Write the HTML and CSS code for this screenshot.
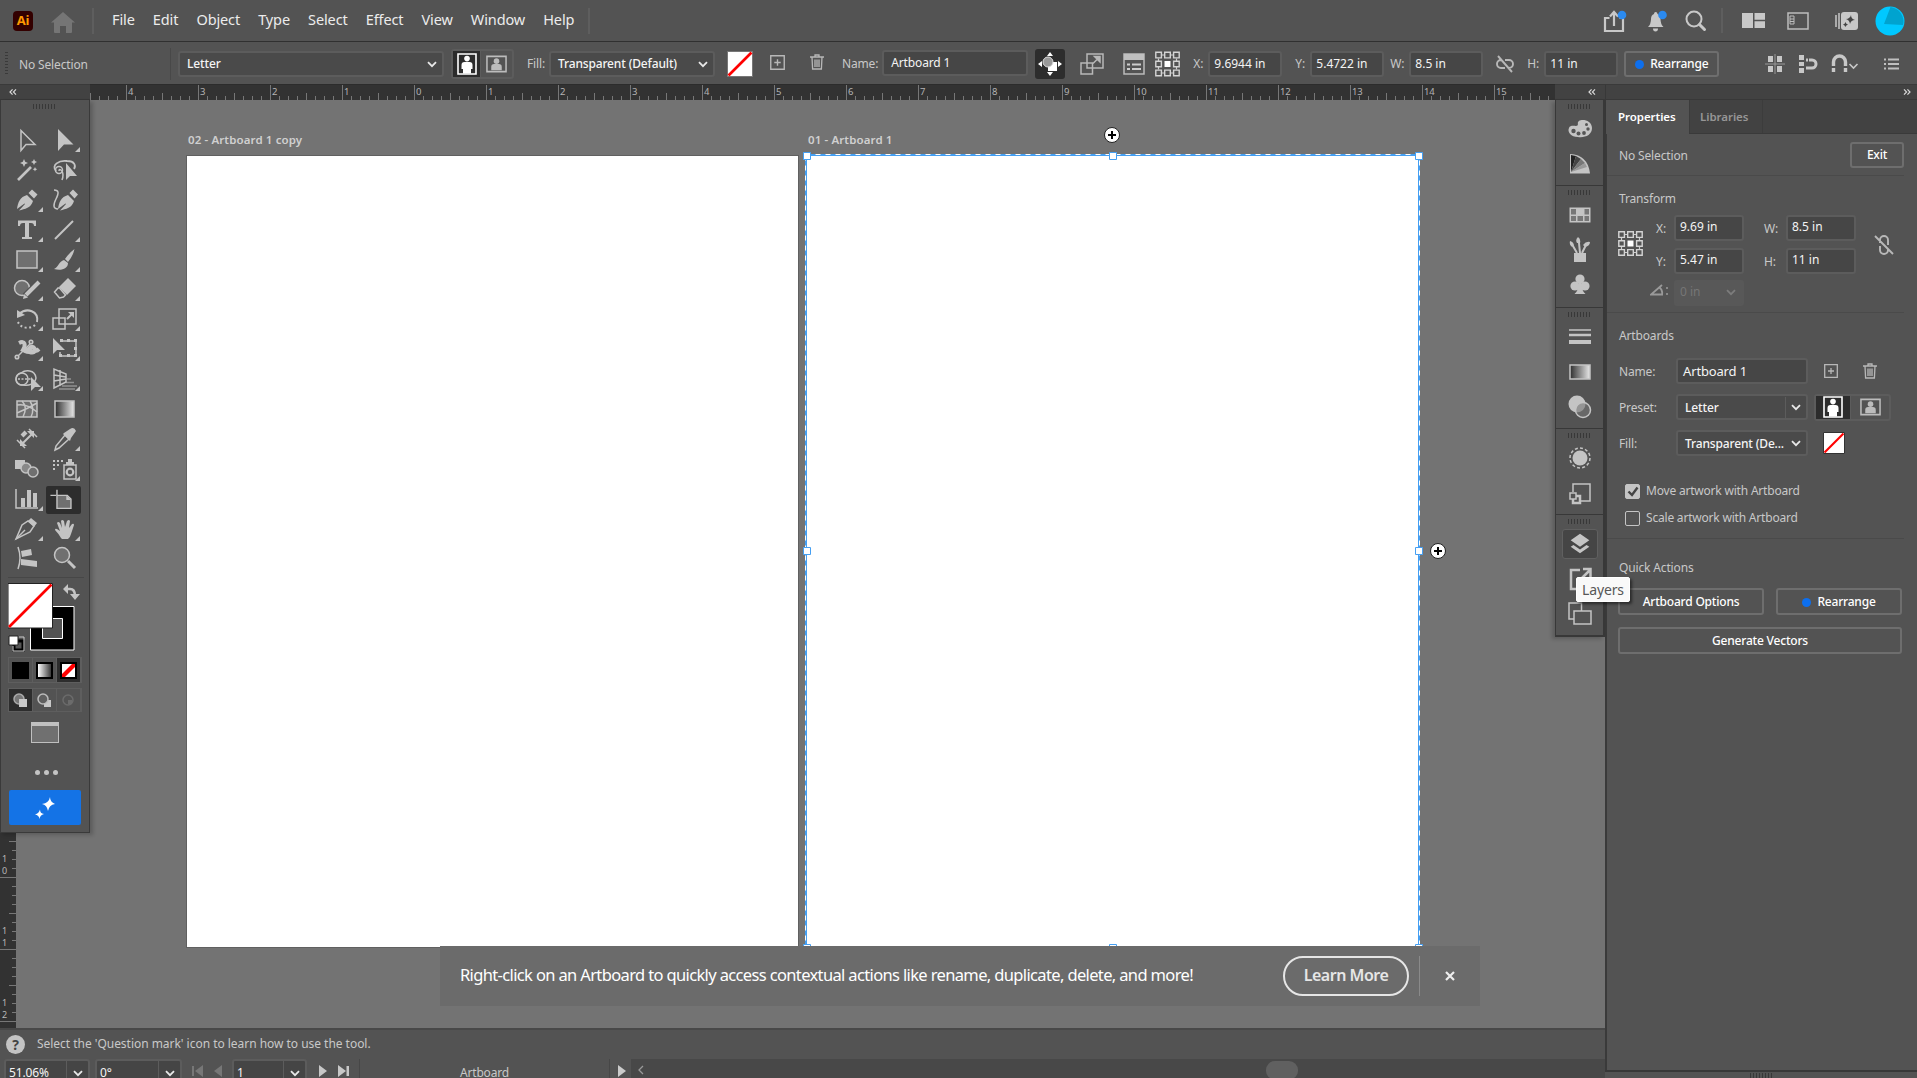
FILE: index.html
```html
<!DOCTYPE html>
<html lang="en">
<head>
  <meta charset="UTF-8" />
  <meta name="viewport" content="width=device-width, initial-scale=1.0"/>
  <title>Illustrator</title>
  <link rel="stylesheet" href="styles.css">
</head>
<body>
  <!-- Shared icons -->
  <svg class="defs" width="0" height="0">
    <defs>
      <linearGradient id="grad"><stop offset="0" stop-color="#2e2e2e"/><stop offset="1" stop-color="#e8e8e8"/></linearGradient>
      <linearGradient id="gradLight"><stop offset="0" stop-color="#fff"/><stop offset="1" stop-color="#3a3a3a"/></linearGradient>
    </defs>
    <symbol id="chevron" viewBox="0 0 10 7"><path d="M1 1.2l4 4 4-4" fill="none" stroke="currentColor" stroke-width="1.8"/></symbol>
    <symbol id="portrait" viewBox="0 0 20 22"><path d="M1 1h18v20H1z" fill="none" stroke="currentColor" stroke-width="1.6"/><circle cx="10" cy="5.600" r="2.8" fill="currentColor"/><path d="M4.500 12q0-3 3-3h5q3 0 3 3v4H14v4.500H6V16H4.500z" fill="currentColor"/></symbol>
    <symbol id="landscape" viewBox="0 0 22 18"><path d="M1 1h20v16H1z" fill="none" stroke="currentColor" stroke-width="1.6"/><circle cx="11" cy="6" r="2.900" fill="currentColor"/><path d="M5.500 15.500V12q0-3 3-3h5q3 0 3 3v3.500z" fill="currentColor"/></symbol>
    <symbol id="add" viewBox="0 0 14 14"><path d="M.7.7h12.600v12.600H.7zM7 4v6M4 7h6" fill="none" stroke="currentColor" stroke-width="1.300"/></symbol>
    <symbol id="trash" viewBox="0 0 14 16"><path d="M0 3h14M5 3V1h4v2M2 3l.6 12h8.800L12 3M5 5.500v7.500M7 5.500v7.500M9 5.500v7.500" fill="none" stroke="currentColor" stroke-width="1.300"/></symbol>
    <symbol id="refpoint" viewBox="0 0 25 25"><path d="M7 3.500h3M15 3.500h3M7 21.500h3M15 21.500h3M3.500 7v3M3.500 15v3M21.500 7v3M21.500 15v3" stroke="#ccc" stroke-width="1.200"/><path d="M.8.8h5.600v5.600H.8zM9.700.8h5.600v5.600H9.700zM18.600.8h5.600v5.600h-5.600zM.8 9.700h5.600v5.600H.8zM18.600 9.700h5.600v5.600h-5.600zM.8 18.600h5.600v5.600H.8zM9.700 18.600h5.600v5.600H9.700zM18.600 18.600h5.600v5.600h-5.600z" fill="none" stroke="#d4d4d4" stroke-width="1.400"/><path d="M9.500 9.500h6v6h-6z" fill="#fff"/></symbol>
    <symbol id="unlink" viewBox="0 0 20 20"><path d="M7 6H6a4 4 0 0 0 0 8h4M10 6h4a4 4 0 0 1 0 8h-1M3 2l14 16" fill="none" stroke="currentColor" stroke-width="1.900"/></symbol>
    <symbol id="unlink-v" viewBox="0 0 20 22"><path d="M6 9V6a4 4 0 0 1 8 0v5M6 12v4a4 4 0 0 0 8 0v-1M1 2l18 18" fill="none" stroke="currentColor" stroke-width="1.900"/></symbol>
    <symbol id="scale" viewBox="0 0 24 22"><path d="M7 1h16v14H7zM1 10h11.500v11H1z" fill="none" stroke="currentColor" stroke-width="1.500"/><path d="M13 10.500l5-5M14.500 3.500H20V9z" fill="currentColor" stroke="currentColor" stroke-width="1.500"/></symbol>
    <symbol id="dbl-left" viewBox="0 0 9 7"><path d="M4 .5L1 3.500l3 3M8 .5L5 3.500l3 3" fill="none" stroke="#d8d8d8" stroke-width="1.400"/></symbol>
  </svg>

  <header class="menubar">
    <div class="logo">Ai</div>
    <svg class="home" width="24" height="21" viewBox="0 0 24 21"><path d="M12 0l12 10.500h-3V20q0 1-1 1h-5v-7H9v7H4q-1 0-1-1v-9.500H0z" fill="#757575"/></svg>
    <nav class="menu">
      <a>File</a><a>Edit</a><a>Object</a><a>Type</a><a>Select</a><a>Effect</a><a>View</a><a>Window</a><a>Help</a>
    </nav>
    <div class="menu-icons">
      <svg class="mi-share" width="24" height="24" viewBox="0 0 24 24"><path d="M6.500 9H2v13h18V9h-3.500" fill="none" stroke="#c8c8c8" stroke-width="2.200"/><path d="M11 17V4M7 7.500L11 3l4 4.500" fill="none" stroke="#c8c8c8" stroke-width="2.200"/><circle cx="19" cy="6" r="4.300" fill="#2a8af0"/></svg>
      <svg class="mi-bell" width="21" height="24" viewBox="0 0 21 24"><path d="M1 18q3-3 3-8 0-4 3-5 0-2 1.700-2t1.800 2q3 1 3 5 0 5 3 8zM6 19.500h5q0 3-2.500 3T6 19.500z" fill="#c8c8c8"/><circle cx="15.500" cy="6" r="4.300" fill="#2a8af0"/></svg>
      <svg class="mi-search" width="22" height="22" viewBox="0 0 22 22"><circle cx="9" cy="9" r="7.500" fill="none" stroke="#c8c8c8" stroke-width="2"/><path d="M14.500 14.500l5 5" stroke="#c8c8c8" stroke-width="3" stroke-linecap="round"/></svg>
      <i class="sep"></i>
      <svg class="mi-layout" width="23" height="15" viewBox="0 0 23 15"><path d="M0 0h11v15H0zM12.500 0H23v6.700H12.500zM12.500 8.300H23V15H12.500z" fill="#c8c8c8"/></svg>
      <svg class="mi-panel" width="22" height="18" viewBox="0 0 22 18"><path d="M1 1h20v16H1z" fill="none" stroke="#bdbdbd" stroke-width="1.500"/><path d="M3 4h4v8H3z" fill="none" stroke="#bdbdbd"/><path d="M3 7h4M3 9.500h4" stroke="#bdbdbd"/></svg>
      <svg class="mi-spark" width="24" height="20" viewBox="0 0 24 20"><path d="M1 4v12M4 2v16" stroke="#c8c8c8" stroke-width="1.500"/><rect x="6" y="1" width="17" height="18" rx="3" fill="#c8c8c8"/><path d="M16 4q0 4 4 5-4 0-5 4-.5-4-4-5 4-.3 5-4zM10.500 11q.5 2 2.500 2.500-2 .5-2.700 2.500-.3-2-2.300-2.500 2-.5 2.500-2.500z" fill="#444"/></svg>
      <svg class="mi-user" width="30" height="30" viewBox="0 0 30 30"><circle cx="15" cy="15" r="14.500" fill="#00c8ff"/><path d="M15.500 1A14.500 14.500 0 0 1 28 19L9 18z" fill="#00a3cf"/></svg>
    </div>
  </header>

  <div class="controlbar">
    <i class="vgrip"></i>
    <span class="lbl nosel">No Selection</span>
    <div class="field select c-preset"><span>Letter</span><svg width="10" height="7"><use href="#chevron"/></svg></div>
    <div class="orient c-orient">
      <span class="on"><svg width="20" height="22"><use href="#portrait"/></svg></span><span><svg width="21" height="18"><use href="#landscape"/></svg></span>
    </div>
    <span class="lbl c-fill">Fill:</span>
    <div class="field select c-fillsel"><span>Transparent (Default)</span><svg width="10" height="7"><use href="#chevron"/></svg></div>
    <svg class="c-swatch" width="26" height="26" viewBox="0 0 26 26"><path d="M.5.500h25v25H.5z" fill="#fff" stroke="#777"/><path d="M1.500 24.500l23-23" stroke="#f00" stroke-width="2.600"/></svg>
    <svg class="ico c-add" width="15" height="15"><use href="#add"/></svg>
    <svg class="ico c-trash" width="14" height="16"><use href="#trash"/></svg>
    <span class="lbl c-name">Name:</span>
    <div class="field c-nameinput">Artboard 1</div>
    <span class="c-move"><svg width="24" height="24" viewBox="0 0 24 24"><path d="M12 0l3 4H9zM12 24l3-4H9zM0 12l4-3v6zM24 12l-4-3v6z" fill="#fff"/><path d="M10 10h9v9h-9z" fill="#fff"/><circle cx="10" cy="10" r="5" fill="#999" stroke="#ddd"/></svg></span>
    <svg class="ico c-scale" width="24" height="22"><use href="#scale"/></svg>
    <svg class="c-list" width="22" height="22" viewBox="0 0 22 22"><path d="M1 1h20v20H1z" fill="none" stroke="#bbb" stroke-width="1.500"/><path d="M1 1h20v6H1z" fill="#c0c0c0"/><path d="M4 11.500h3M9 11.500h9M4 16h3M9 16h9" stroke="#ccc" stroke-width="1.800"/></svg>
    <svg class="c-ref" width="25" height="26"><use href="#refpoint"/></svg>
    <span class="lbl c-x">X:</span><div class="field num">9.6944 in</div>
    <span class="lbl c-y">Y:</span><div class="field num">5.4722 in</div>
    <span class="lbl c-w">W:</span><div class="field num">8.5 in</div>
    <svg class="ico c-link" width="20" height="20"><use href="#unlink"/></svg>
    <span class="lbl c-h">H:</span><div class="field num">11 in</div>
    <button class="btn c-rearrange"><i class="dot"></i>Rearrange</button>
    <div class="align-icons">
      <svg width="20" height="20" viewBox="0 0 20 20"><path d="M3 2h5v6H3zM12 2h5v6h-5zM3 12h5v6H3zM12 12h5v6h-5z" fill="#c8c8c8"/><path d="M0 10h20M10 0v20" stroke="#999" stroke-width="1"/></svg>
      <svg width="20" height="20" viewBox="0 0 20 20"><path d="M1 1h5v5H1zM1 8h5v4H1zM1 14h5v5H1z" fill="#c8c8c8"/><path d="M8 6h6a4 4 0 0 1 0 8H8" fill="none" stroke="#c8c8c8" stroke-width="3" stroke-dasharray="2 1 30"/></svg>
      <svg width="28" height="20" viewBox="0 0 28 20"><path d="M2.500 12V8a6 6 0 0 1 12 0v4" fill="none" stroke="#c8c8c8" stroke-width="3.400"/><path d="M.8 14h3.400v4H.8zM12.800 14h3.400v4h-3.400z" fill="#c8c8c8"/><path d="M18.500 10l4 4 4-4" fill="none" stroke="#c8c8c8" stroke-width="1.600"/></svg>
    </div>
    <svg class="c-menu" width="15" height="12" viewBox="0 0 15 12"><path d="M0 1.500h2M0 6h2M0 10.500h2M4 1.500h11M4 6h11M4 10.500h11" stroke="#c0c0c0" stroke-width="1.800"/></svg>
  </div>

  <div class="workspace">
    <div class="left">
      <div class="stage">

        <aside class="toolcol">
          <div class="panel-head"><svg width="8" height="6"><use href="#dbl-left"/></svg></div>
          <div class="toolbar">
            <i class="grip"></i>
            <div class="tools">
              <svg viewBox="-17 -15 34 30"><path d="M-6-9.500v20l5-6h9z"/></svg>
              <svg viewBox="-17 -15 34 30"><path class="f" d="M-7-11v22l6-6.500h9.500z"/><path class="f" d="M15 7v5h-5z"/></svg>
              <svg viewBox="-17 -15 34 30"><path stroke-width="2.600" d="M-9 10L4-3"/><path class="f" d="M-3-11l1.200 2.800 2.800 1.200-2.800 1.200-1.200 2.800-1.200-2.800L-7-7l2.800-1.200zM7-11l1 2 2 1-2 1-1 2-1-2-2-1 2-1zM8-3l.7 1.500 1.600.7-1.600.7L8 1.500l-.7-1.600L5.700-.8l1.600-.7z"/></svg>
              <svg viewBox="-17 -15 34 30"><path stroke-width="1.800" d="M-9 1C-14-5-6-10 2-9 10-9 11-4 9-1"/><circle cx="-6" cy="0" r="3.500"/><path d="M-6 1q0-3 3 0 2 4 0 9"/><path class="f" d="M1-7V10l4-4h7z"/></svg>
              <svg viewBox="-17 -15 34 30"><path class="f" d="M-10 9C-9 2-7-3 0-5L6 1C4 8-2 9-8 10.500L-2 4-2.500 3.500zM1.500-7L5-10.500 10.500-5.500 7-1.500z"/><path class="f" d="M16 7v5h-5z"/></svg>
              <svg viewBox="-17 -15 34 30"><path class="f" d="M-7 9C-6 2-4-3 3-5L9 1C7 8 1 9-5 10.500L1 4 .5 3.500zM4.500-7L8-10.500 13-5.500 9.500-1.500z"/><path d="M-11-10c5 0 5 3 2 9s-3 10 2 10"/></svg>
              <svg viewBox="-17 -15 34 30"><path class="f" d="M-9-9.500H9V-4H7q0-3-3-3H2V7h3v2H-5V7h3V-7h-2q-3 0-3 3h-2z"/><path class="f" d="M16 7v5h-5z"/></svg>
              <svg viewBox="-17 -15 34 30"><path stroke-width="2" d="M-10 9L8-9"/><path class="f" d="M15 7v5h-5z"/></svg>
              <svg viewBox="-17 -15 34 30"><path class="m" d="M-10-9h20V8h-20z"/><path class="f" d="M16 7v5h-5z"/></svg>
              <svg viewBox="-17 -15 34 30"><path class="f" d="M9.500-11Q8-4 3 2L0-1Q4-7 9.500-11zM-1 0L3 3C3 9-4 11-11 9-7 8-6 1-1 0z"/><path class="f" d="M15 7v5h-5z"/></svg>
              <svg viewBox="-17 -15 34 30"><circle class="m" cx="-5" cy="-1" r="7.500"/><path stroke="#535353" stroke-width="6.500" d="M-2 7L13-8"/><path stroke-width="4" d="M-1 6L12-7"/><path class="f" d="M-4 10l1-5 4 3.500z"/><path class="f" d="M16 7v5h-5z"/></svg>
              <svg viewBox="-17 -15 34 30"><path class="f" d="M3-11L11-3 2 6-6-2z"/><path d="M-7-1L-10.500 3l5 6 4-1 2-2-6-7z"/><path class="f" d="M15 7v5h-5z"/></svg>
              <svg viewBox="-17 -15 34 30"><path stroke-width="2" d="M-8-5C0-12 12-8 10 3"/><path class="f" d="M-10-9l0 8 8-3z"/><path d="M8 6C4 10-6 10-9 3" stroke-dasharray="2 2.500" stroke-width="2"/><path class="f" d="M16 7v5h-5z"/></svg>
              <svg viewBox="-17 -15 34 30"><path d="M-6-10H11V5H-6zM-12-1H0V10H-12z"/><path class="f" d="M3-7H9v6z"/><path stroke-width="2" d="M2 0l5-5"/><path class="f" d="M15 7v5h-5z"/></svg>
              <svg viewBox="-17 -15 34 30"><path stroke-width="4" d="M-8-6C-2-9-1-4-4 1 2 4 2-4 6-2 9 0 8 4 12 0"/><path class="f" d="M-6 1Q0-3 10 2 8 7 2 5-3 5-6 1z"/><path d="M-9 7L4-6"/><circle cx="-10" cy="8" r="1.800" class="m"/><circle cx="4" cy="-7" r="1.800" class="m"/><path class="f" d="M16 7v5h-5z"/></svg>
              <svg viewBox="-17 -15 34 30"><path d="M-3-8H11V7H-5V3"/><path class="f" d="M-12-11V5l4-4h8z"/><path class="f" d="M-5-10h3v3h-3zM2-10h3v3H2zM9-10h3v3H9zM9-2h3v3H9zM9 5h3v3H9zM2 5h3v3H2zM-6 5h3v3h-3z"/><path class="f" d="M15 7v5h-5z"/></svg>
              <svg viewBox="-17 -15 34 30"><path d="M-6-6C-2-9 8-10 9-1 8 5 2 7-4 6A6 6 0 1 1-6-6z"/><circle cx="-5" cy="0" r="6"/><path d="M-9 0h14" stroke-dasharray="2 1.500"/><path class="f" d="M4-2v14l4-4h6z"/><path class="f" d="M16 7v5h-5z"/></svg>
              <svg viewBox="-17 -15 34 30"><path d="M-11-10v19L1 3V-5zM-11-4L1-2M-11 2L1 0M-5-9V7"/><path d="M2 0h4M1 3.500h8M-3 7h15M-6 10h16" opacity=".55"/><path class="f" d="M15 7v5h-5z"/></svg>
              <svg viewBox="-17 -15 34 30"><path class="m" d="M-10-8h20V8h-20z"/><path d="M-5-8q6 6 1 16M10-6Q0 0-10 4M3-8q5 8 1 16M-10-4q10-2 20 7"/></svg>
              <svg viewBox="-17 -15 34 30"><path d="M-10-8H9V8h-19z" fill="url(#grad)"/></svg>
              <svg viewBox="-17 -15 34 30"><path d="M-10 1L-2 9M2-10L10-2"/><path stroke-width="2" d="M-4 4L5-5"/><path class="f" d="M-7 0v7H0zM7-1v-7H0z"/><path stroke-width="4" d="M-5-3L-1-7"/></svg>
              <svg viewBox="-17 -15 34 30"><path d="M0-4L4 0-6 9l-4 2 1-4z"/><path class="f" d="M-1-6L5-10Q9-13 11-8L6-1 5 2-2-5z"/><path class="f" d="M15 7v5h-5z"/></svg>
              <svg viewBox="-17 -15 34 30"><path class="f" d="M-12-9h10v9h-10z"/><circle fill="#888" cx="-1" cy="-1" r="5"/><circle class="m" cx="6" cy="3" r="5"/></svg>
              <svg viewBox="-17 -15 34 30"><path d="M-1-4H11V10H-1z"/><circle cx="5" cy="3" r="3.300" stroke-width="2.200"/><path class="f" d="M1-7H9v3H1zM3-10H7v3H3zM-12-9h2v2h-2zM-8-9h2v2h-2zM-4-9h2v2h-2zM-12-5h2v2h-2zM-8-5h2v2h-2zM-12-1h2v2h-2z"/><path class="f" d="M15 7v5h-5z"/></svg>
              <svg viewBox="-17 -15 34 30"><path d="M-11-10V9H11"/><path class="f" d="M-6-1h4v9h-4zM0-9H4V8H0zM6-6h4V8H6z"/><path class="f" d="M16 7v5h-5z"/></svg>
              <svg class="on" viewBox="-17 -15 34 30"><path class="m" d="M-7-5H4L8-1V9H-7z"/><path d="M-7-11v6M-14-5h6" stroke-width="1.500"/><path class="f" d="M3-5v5h5z"/></svg>
              <svg viewBox="-17 -15 34 30"><path d="M-11 10L-5-4 1-8 7-3 3 3z"/><path d="M-11 10L-2 1"/><path class="f" d="M1-8L4-11 10-6 7-2z"/><path class="f" d="M16 7v5h-5z"/></svg>
              <svg viewBox="-17 -15 34 30"><path class="f" d="M-4 9Q-7 4-10 1q0-2 2-1l3 2-3-8q1-2 3 0l2 5-1-7q1-2 3 0l1 6 2-6q2-2 3 0L4-1 7-5q2-1 2 1L6 5Q5 9 3 10h-6z"/><path class="f" d="M15 7v5h-5z"/></svg>
              <svg viewBox="-17 -15 34 30"><path d="M-9-11Q-5 0-9 11"/><path class="f" d="M-6-7L4-9 5-3-5-1zM-6 1L10 3V9L-6 7z"/></svg>
              <svg viewBox="-17 -15 34 30"><circle class="m" cx="-3" cy="-3" r="7.500"/><path stroke-width="3" d="M3 3l7 7"/></svg>
            </div>
            <svg class="fillstroke" width="73" height="72" viewBox="0 0 73 72"><path d="M22.500 23.500h43.500v43.500H22.500z" fill="#000" stroke="#fff"/><path d="M34.500 35.500h20v20h-20z" fill="#535353" stroke="#fff"/><path d="M0 .5h44.500v44.500H0z" fill="#fff" stroke="#222"/><path d="M1 44L43.500 1.500" stroke="#f00" stroke-width="2.600"/><path d="M59 6h3q5 0 5 7" fill="none" stroke="#c4c4c4" stroke-width="2.600"/><path d="M55 6l5-5v10zM62 11h10l-5 6z" fill="#c4c4c4"/><path d="M6 58h9v9H6z" fill="#555" stroke="#000" stroke-width="3"/><path d="M10.500 54h5.500v14H5V63" fill="none" stroke="#ccc"/><path d="M1 53h9v9H1z" fill="#fff" stroke="#222"/></svg>
            <div class="modes colors">
              <span><svg width="17" height="17"><path d="M0 0h17v17H0z"/></svg></span>
              <span><svg width="17" height="17"><path d="M0 0h17v17H0z"/><path d="M2 2h13v13H2z" fill="url(#gradLight)"/></svg></span>
              <span class="on"><svg width="17" height="17"><path d="M0 0h17v17H0z"/><path d="M2 2h13v13H2z" fill="#fff"/><path d="M2 12L12 2h3v3L5 15H2z" fill="#f00"/></svg></span>
            </div>
            <div class="modes draw">
              <span class="on"><svg width="15" height="14"><circle cx="6" cy="6" r="5" fill="#777" stroke="#aaa" stroke-width="1.500"/><path d="M6 6h8v8H6z" fill="#c8c8c8"/></svg></span>
              <span><svg width="15" height="14"><path d="M7 7h7v7H7z" fill="#c8c8c8"/><circle cx="6" cy="6" r="5" fill="#606060" stroke="#bbb" stroke-width="1.500"/></svg></span>
              <span><svg width="15" height="14"><circle cx="7" cy="7" r="5" fill="none" stroke="#6b6b6b" stroke-width="1.500"/><path d="M7 7h4v4H7z" fill="#6b6b6b"/></svg></span>
            </div>
            <div class="screenmode"></div>
            <div class="dots"><i></i><i></i><i></i></div>
            <div class="genbtn"><svg width="20" height="22" viewBox="0 0 20 22"><path d="M15 0q0 5 5 7-6 1-7 7-1-6-6-7 7-1 8-7zM5 12.500q0 4 4 4.500-4 1-4.500 5Q4 18 0 17.500q4-1 5-5z" fill="#fff"/></svg></div>
          </div>
          <div class="vruler">
            <span>1<br>0</span><span>1<br>1</span><span>1<br>2</span>
          </div>
        </aside>

        <div class="center">
          <div class="hruler">
            <span>4</span><span>3</span><span>2</span><span>1</span><span>0</span><span>1</span><span>2</span><span>3</span><span>4</span><span>5</span><span>6</span><span>7</span><span>8</span><span>9</span><span>10</span><span>11</span><span>12</span><span>13</span><span>14</span><span>15</span>
          </div>
          <main class="canvas">
            <div class="artboard copy"><span class="title">02 - Artboard 1 copy</span></div>
            <div class="artboard active">
              <span class="title">01 - Artboard 1</span>
              <svg class="selection" width="660" height="830" viewBox="-10 -30 660 830">
                <path d="M-1-1h613v793H-1z" fill="none" stroke="#459ff2" stroke-width="2"/>
                <path d="M-1.500-1.500h614v794H-1.500z" fill="none" stroke="#fff" stroke-dasharray="5 5"/>
                <g fill="#fff" stroke="#459ff2"><path d="M-3.500-3.500h7v7h-7zM302.500-3.500h7v7h-7zM608.500-3.500h7v7h-7zM-3.500 391.500h7v7h-7zM608.500 391.500h7v7h-7zM-3.500 788.500h7v7h-7zM302.500 788.500h7v7h-7zM608.500 788.500h7v7h-7z"/></g>
                <g fill="#fff" stroke="#222"><circle cx="305" cy="-21" r="7.500"/><circle cx="631" cy="395" r="7.500"/></g>
                <path d="M301-21h8M305-25v8M627 395h8M631 391v8" stroke="#000" stroke-width="2"/>
              </svg>
            </div>
            <div class="notice">
              <span class="notice-text">Right-click on an Artboard to quickly access contextual actions like rename, duplicate, delete, and more!</span>
              <button class="learn">Learn More</button>
              <i class="bar"></i>
              <svg width="10" height="10" viewBox="0 0 10 10"><path d="M1 1l8 8M9 1L1 9" stroke="#eee" stroke-width="2.200"/></svg>
            </div>
          </main>
        </div>

        <aside class="dockcol">
          <div class="panel-head right"><svg width="8" height="6"><use href="#dbl-left"/></svg></div>
          <div class="dock">
            <section>
              <i class="grip"></i>
              <svg viewBox="-15 -15 30 30"><path class="f" d="M-2-5C-4-11 12-11 12-1 12 6 5 9-2 8-9 8-13 3-11-1-10-4-6-3-4-3q2 0 2-2z"/><g fill="#555" stroke="none"><circle cx="-6.500" cy="2" r="2.200"/><circle cx="-1.500" cy="4.500" r="2"/><circle cx="4" cy="4" r="1.900"/><circle cx="8" cy="0" r="1.700"/><circle cx="6.500" cy="-4.500" r="1.500"/></g></svg>
              <svg viewBox="-15 -15 30 30"><path class="f" d="M-10-10Q8-9 10 9.500H-10z"/><g stroke="none"><path d="M-9 8V-9L-4-8z" fill="#222"/><path d="M-9 8L-4-8 1-5z" fill="#444"/><path d="M-9 8L1-5 5-1z" fill="#777"/><path d="M-9 8L5-1 7 3z" fill="#999"/></g></svg>
            </section>
            <section>
              <i class="grip"></i>
              <svg viewBox="-15 -15 30 30"><path class="f" d="M-10.500-7.500h21v15h-21z"/><path d="M-9-6h5v5.500h-5zM4.500-6H9v5.500H4.500zM-9 1h5v5h-5zM-2.500 1h5.500v5h-5.500zM4.500 1H9v5H4.500z" fill="#777" stroke="none"/></svg>
              <svg viewBox="-15 -15 30 30"><path class="f" d="M-6 3H6v9H-6zM-10-9q4 1 4 5l-2 1q-3-2-2-6zM-2-13q3 2 2 6h-3q-2-3 1-6zM3-5Q6-9 10-8q0 4-5 5z"/><path d="M-7-4l4 7M-1-7L0 3M6-5L2 3" stroke-width="2"/></svg>
              <svg viewBox="-15 -15 30 30"><g class="f"><circle cx="0" cy="-6" r="4.600"/><circle cx="-5" cy="1" r="4.600"/><circle cx="5" cy="1" r="4.600"/><path d="M-1.500-3h3q0 9 4 12h-11q4-3 4-12z"/></g></svg>
            </section>
            <section>
              <i class="grip"></i>
              <svg viewBox="-15 -15 30 30"><path d="M-11-7h22" stroke-width="1.500"/><path d="M-11-2h22" stroke-width="2.500"/><path d="M-11 5h22" stroke-width="4"/></svg>
              <svg viewBox="-15 -15 30 30"><path d="M-10-7h20V7h-20z" fill="url(#grad)"/></svg>
              <svg viewBox="-15 -15 30 30"><circle class="f" cx="-3" cy="-3" r="8.500"/><circle cx="3" cy="3" r="7.500" fill="#7779"/></svg>
            </section>
            <section>
              <i class="grip"></i>
              <svg viewBox="-15 -15 30 30"><circle class="f" r="7.500"/><circle r="10" stroke-dasharray="3 2.200"/></svg>
              <svg viewBox="-15 -15 30 30"><path d="M-7-1V-9h17V8H1M-10 0h6v6h-6z"/><path d="M-7 6v4h7V3h-4" stroke-width="2.500"/></svg>
            </section>
            <section>
              <i class="grip"></i>
              <svg class="on" viewBox="-18 -15 36 30"><path class="f" d="M0-11L10-4 0 3-10-4zM-10 3l3-2L0 6l7-5 3 2L0 10z"/></svg>
              <svg viewBox="-15 -15 30 30"><path d="M0-9H-9V10H8V3" stroke-width="2.500"/><path d="M0 1L10-9M3-10h7.500v8" stroke-width="2.500"/></svg>
              <svg viewBox="-15 -15 30 30"><path d="M-6 5h-5v-16H1.500v8M-6-3H11V10H-6z"/></svg>
            </section>
            <div class="tooltip">Layers</div>
          </div>
        </aside>
      </div>

      <div class="status">
        <span class="help">?</span>
        <span class="hint">Select the 'Question mark' icon to learn how to use the tool.</span>
      </div>
      <div class="navbar">
        <div class="nfield n-zoom"><span>51.06%</span><b><svg width="10" height="7"><use href="#chevron"/></svg></b></div>
        <div class="nfield n-rot"><span>0°</span><b><svg width="10" height="7"><use href="#chevron"/></svg></b></div>
        <svg class="n-first" width="32" height="12" viewBox="0 0 32 12"><path d="M1 1h2v10H1zM12 0v12L4 6zM31 0v12l-8-6z" fill="#777"/></svg>
        <div class="nfield n-page"><span>1</span><b><svg width="10" height="7"><use href="#chevron"/></svg></b></div>
        <svg class="n-next" width="32" height="12" viewBox="0 0 32 12"><path d="M1 0l8 6-8 6zM20 0l8 6-8 6zM28.500 1h2.500v10h-2.500z" fill="#c8c8c8"/></svg>
        <div class="n-info">Artboard</div>
        <svg class="n-play" width="8" height="12"><path d="M0 0l8 6-8 6z" fill="#ccc"/></svg>
        <div class="hscroll"><svg width="6" height="10"><path d="M5 1L1 5l4 4" fill="none" stroke="#999" stroke-width="1.300"/></svg><i class="thumb"></i></div>
      </div>
    </div>

    <aside class="props">
      <div class="panel-head far"><svg width="8" height="6"><use href="#dbl-left"/></svg></div>
      <div class="tabs"><span class="tab on">Properties</span><span class="tab">Libraries</span></div>
      <div class="props-body">
        <section class="p-sel"><span>No Selection</span><button class="btn">Exit</button></section>
        <section class="p-transform">
          <h3>Transform</h3>
          <div class="tf">
            <svg class="tf-ref" width="25" height="25"><use href="#refpoint"/></svg>
            <div class="tf-fields">
              <label>X:</label><div class="field">9.69 in</div><label>W:</label><div class="field">8.5 in</div>
              <label>Y:</label><div class="field">5.47 in</div><label>H:</label><div class="field">11 in</div>
              <svg class="tf-angle" width="19" height="12"><path d="M12 1L1 10.500h12M9 3q4 3 3 7.500" fill="none" stroke="#999" stroke-width="1.800"/><path d="M16 3h2v2h-2zM16 9h2v2h-2z" fill="#888"/></svg>
              <div class="field off"><span>0 in</span><svg width="10" height="7"><use href="#chevron"/></svg></div>
            </div>
            <svg class="ico tf-link" width="20" height="22"><use href="#unlink-v"/></svg>
          </div>
        </section>
        <section class="p-art">
          <h3>Artboards</h3>
          <div class="row">
            <label>Name:</label><div class="field big">Artboard 1</div>
            <svg class="ico a-add" width="14" height="14"><use href="#add"/></svg>
            <svg class="ico a-trash" width="14" height="16"><use href="#trash"/></svg>
          </div>
          <div class="row">
            <label>Preset:</label><div class="field select split"><span>Letter</span><b><svg width="10" height="7"><use href="#chevron"/></svg></b></div>
            <div class="orient"><span class="on"><svg width="20" height="22"><use href="#portrait"/></svg></span><span><svg width="21" height="18"><use href="#landscape"/></svg></span></div>
          </div>
          <div class="row">
            <label>Fill:</label><div class="field select"><span>Transparent (De...</span><svg width="10" height="7"><use href="#chevron"/></svg></div>
            <svg class="a-swatch" width="22" height="22" viewBox="0 0 22 22"><path d="M.5.500h21v21H.5z" fill="#fff" stroke="#333"/><path d="M1.500 20.500l19-19" stroke="#f00" stroke-width="2.200"/></svg>
          </div>
          <div class="check first"><i class="box checked"><svg width="12" height="11"><path d="M1.500 5.500l3.500 3.500L10.500 1.500" fill="none" stroke="#444" stroke-width="2.400"/></svg></i>Move artwork with Artboard</div>
          <div class="check"><i class="box"></i>Scale artwork with Artboard</div>
        </section>
        <section class="p-quick">
          <h3>Quick Actions</h3>
          <div class="quick">
            <button class="btn">Artboard Options</button>
            <button class="btn"><i class="dot"></i>Rearrange</button>
            <button class="btn wide">Generate Vectors</button>
          </div>
        </section>
      </div>
      <div class="props-foot"><i class="grip"></i></div>
    </aside>
  </div>
</body>
</html>
```
FILE: styles.css
```css
* {
  box-sizing: border-box;
}

html, body {
  height: 100%;
  margin: 0;
  overflow: hidden;
}

body {
  display: flex;
  flex-direction: column;
  width: 1917px;
  height: 1078px;
  background: #535353;
  color: #c8c8c8;
  font: 12px/16px "Noto Sans", "Open Sans", sans-serif;
  letter-spacing: -.15px;
}

svg {
  display: block;
  flex: none;
  color: #e8e8e8;
}

.defs {
  position: absolute;
}

.ico {
  color: #b8b8b8;
}

/* menu bar */
.menubar {
  display: flex;
  align-items: center;
  flex: none;
  height: 42px;
  padding: 0 12px 0 13px;
  border-bottom: 1px solid #303030;
}

.logo {
  width: 20px;
  height: 20px;
  border-radius: 4px;
  background: #330000;
  color: #ff9a00;
  font: bold 13px/19px "Open Sans", sans-serif;
  letter-spacing: -.3px;
  text-align: center;
}

.home {
  margin: 3px 0 0 18px;
}

.menu {
  display: flex;
  align-items: center;
  height: 26px;
  margin-left: 17px;
  padding: 0 5px 3px 9px;
  border-left: 2px solid #5e5e5e;
  border-right: 2px solid #5e5e5e;
}

.menu a {
  padding: 0 9.050px;
  color: #ececec;
  font-size: 14.500px;
  letter-spacing: -.12px;
}

.menu-icons {
  display: flex;
  align-items: center;
  margin-left: auto;
}

.mi-bell { margin-left: 20px; }
.mi-search { margin-left: 17px; }
.menu-icons .sep {
  width: 2px;
  height: 25px;
  margin: 0 19px 0 14px;
  background: #5e5e5e;
}
.mi-layout { margin-bottom: 1px; }
.mi-panel { margin-left: 22px; }
.mi-spark { margin-left: 26px; }
.mi-user { margin-left: 16px; }

/* control bar */
.controlbar {
  display: flex;
  align-items: center;
  flex: none;
  height: 42px;
  padding: 1px 18px 0 5px;
}

.vgrip {
  width: 3px;
  height: 24px;
  background: repeating-linear-gradient(#3a3a3a 0 1px, transparent 1px 3px);
}

.lbl {
  padding-top: 1px;
}

.nosel {
  width: 152px;
  height: 32px;
  margin-left: 11px;
  border-right: 1px solid #484848;
  line-height: 32px;
}

.field {
  display: flex;
  align-items: center;
  height: 26px;
  padding: 0 7px;
  border: 2px solid #5c5c5c;
  border-radius: 3px;
  background: #464646;
  color: #f4f4f4;
  white-space: nowrap;
}

.select {
  justify-content: space-between;
  padding: 1px 5px 0 7px;
  background: #4a4a4a;
  font-weight: 500;
}

.c-preset { width: 266px; margin-left: 7px; }
.c-orient { margin-left: 7px; }
.c-fill { margin-left: 13px; }
.c-fillsel { width: 166px; margin-left: 4px; }
.c-swatch { margin-left: 12px; }
.c-add { margin-left: 17px; margin-bottom: 3px; }
.c-trash { margin-left: 25px; margin-bottom: 3px; }
.c-name { margin-left: 18px; }
.c-nameinput { width: 146px; margin-left: 4px; margin-bottom: 2px; }
.c-scale { margin-left: 15px; }
.c-list { margin-left: 19px; }
.c-ref { margin-left: 10px; }

.orient {
  display: flex;
  height: 30px;
  border: 2px solid #5c5c5c;
  border-radius: 3px;
}

.orient span {
  display: flex;
  align-items: center;
  justify-content: center;
  width: 28px;
  border-right: 1px solid #5c5c5c;
}

.orient span svg {
  color: #bcbcbc;
}

.orient span:last-child {
  width: 31px;
  border: 0;
}

.orient .on {
  background: #2c2c2c;
}

.orient .on svg {
  color: #fff;
}

.c-move {
  display: flex;
  align-items: center;
  justify-content: center;
  width: 30px;
  height: 30px;
  margin-left: 7px;
  border-radius: 3px;
  background: #2d2d2d;
}

.c-x { width: 15px; margin-left: 13px; }
.c-y { width: 15px; margin-left: 13px; }
.c-w { width: 19px; margin-left: 6px; }
.c-h { width: 17px; margin-left: 12px; }
.c-link { margin-left: 12px; }
.num { width: 74px; padding: 0 4px; letter-spacing: 0; }

.btn {
  display: flex;
  align-items: center;
  justify-content: center;
  height: 26px;
  padding: 1px 0 0;
  border: 2px solid #6e6e6e;
  border-radius: 3px;
  background: transparent;
  color: #fff;
  font: 500 12px/16px "Noto Sans", sans-serif;
  letter-spacing: -.2px;
}

.dot {
  width: 9px;
  height: 9px;
  margin-right: 6px;
  border-radius: 50%;
  background: #0d6fee;
}

.c-rearrange { width: 95px; margin-left: 6px; }

.align-icons {
  display: flex;
  gap: 13px;
  margin-left: auto;
}

.c-menu { margin-left: 25px; }

/* workspace */
.workspace {
  display: flex;
  height: 994px;
}

.left {
  display: flex;
  flex-direction: column;
  width: 1605px;
}

.stage {
  display: grid;
  grid-template-columns: 90px 1fr 50px;
  grid-template-rows: 944px;
  height: 944px;
  background: #737373;
}

.panel-head {
  display: flex;
  align-items: center;
  height: 16px;
  padding-left: 9px;
  border-top: 1px solid #3a3a3a;
  border-bottom: 1px solid #383838;
  background: #424242;
}

.panel-head.right { padding-left: 33px; }
.panel-head.far { padding-left: 297px; border-left: 1px solid #383838; }
.panel-head.far svg { transform: scaleX(-1); }

.toolcol {
  display: flex;
  flex-direction: column;
  z-index: 1;
}

.toolbar {
  display: flex;
  flex: none;
  flex-direction: column;
  align-items: flex-start;
  height: 733px;
  padding: 4px 7px 0;
  border: 1px solid #3a3a3a;
  border-top: 0;
  background: #535353;
  box-shadow: 3px 2px 4px rgba(0, 0, 0, .2);
  z-index: 1;
}

.grip {
  display: block;
  width: 24px;
  height: 5px;
  background: repeating-linear-gradient(90deg, #383838 0 1px, transparent 1px 3px);
}

.toolbar .grip {
  margin-left: 25px;
}

.tools {
  display: grid;
  grid-template-columns: 38px 38px;
  grid-auto-rows: 29.900px;
  margin-top: 16px;
  padding-bottom: 4px;
  border-bottom: 1px solid #474747;
}

.tools svg {
  width: 34px;
  height: 30px;
  margin-left: 2px;
}

.tools svg.on {
  width: 35px;
  height: 28px;
  margin: 2px 0 0 0;
  border-radius: 2px;
  background: #2d2d2d;
}

.tools svg, .dock svg {
  fill: none;
  stroke: #c4c4c4;
  stroke-width: 1.500;
}

.f {
  fill: #c4c4c4;
  stroke: none;
}

.m {
  fill: #707070;
}

.fillstroke {
  margin-top: 5px;
}

.modes {
  display: flex;
  width: 74px;
  height: 26px;
  margin-top: 2px;
  border: 1px solid #5e5e5e;
}

.modes span {
  display: flex;
  align-items: center;
  justify-content: center;
  flex: 1;
  border-right: 1px solid #5e5e5e;
}

.modes .on {
  background: #2d2d2d;
}

.modes.draw {
  height: 24px;
  margin-top: 5px;
}

.screenmode {
  width: 28px;
  height: 21px;
  margin: 10px 0 0 23px;
  border: 1px solid #c0c0c0;
  border-top-width: 4px;
  background: #707070;
}

.dots {
  display: flex;
  gap: 4px;
  margin: 27px 0 0 27px;
}

.dots i {
  width: 5px;
  height: 5px;
  border-radius: 50%;
  background: #c4c4c4;
}

.genbtn {
  display: flex;
  align-items: center;
  justify-content: center;
  width: 72px;
  height: 35px;
  margin: 15px 0 0 1px;
  border-radius: 2px;
  background: #1473e6;
}

/* rulers */
.vruler {
  flex: 1;
  min-height: 0;
  width: 16px;
  padding-top: 20px;
  overflow: hidden;
  background:
    linear-gradient(#777, #777) 0 44px / 16px 1px no-repeat,
    linear-gradient(#777, #777) 0 116px / 16px 1px no-repeat,
    linear-gradient(#777, #777) 0 188px / 16px 1px no-repeat,
    linear-gradient(#777 1px, transparent 1px) 9px 8px / 7px 36px repeat-y,
    linear-gradient(#777 1px, transparent 1px) 12px 8px / 4px 9px repeat-y,
    #323232;
}

.vruler span {
  display: block;
  height: 72px;
  padding-left: 2px;
  color: #b8b8b8;
  font-size: 9px;
  line-height: 12px;
}

.vruler span:last-child {
  height: 24px;
}

.hruler {
  display: flex;
  height: 16px;
  padding-left: 36px;
  overflow: hidden;
  border-top: 1px solid #2c2c2c;
  background:
    linear-gradient(90deg, #777 1px, transparent 1px) 36px 100% / 72px 16px repeat-x,
    linear-gradient(90deg, #777 1px, transparent 1px) 0 100% / 36px 7px repeat-x,
    linear-gradient(90deg, #777 1px, transparent 1px) 0 100% / 9px 4px repeat-x,
    #323232;
}

.hruler span {
  flex: none;
  width: 72px;
  padding-left: 2px;
  color: #b4b4b4;
  font-size: 9.500px;
  line-height: 14px;
}

/* canvas */
.center {
  display: flex;
  flex-direction: column;
  min-width: 0;
}

.canvas {
  position: relative;
  flex: 1;
}

.artboard {
  position: absolute;
  top: 56px;
  width: 611px;
  height: 791px;
  background: #fff;
}

.artboard.copy {
  left: 97px;
  box-shadow: 0 0 0 1px #606060;
}

.artboard.active {
  left: 717px;
}

.title {
  position: absolute;
  top: -24px;
  left: 1px;
  color: #d0d0d0;
  font-size: 11.500px;
  font-weight: 600;
  letter-spacing: .12px;
  white-space: nowrap;
}

.selection {
  position: absolute;
  top: -30px;
  left: -10px;
}

.notice {
  position: absolute;
  top: 846px;
  left: 350px;
  display: flex;
  align-items: center;
  width: 1040px;
  height: 60px;
  padding-left: 20px;
  background: #6b6b6b;
  color: #fff;
}

.notice-text {
  width: 823px;
  padding-bottom: 2px;
  font-size: 16.500px;
  letter-spacing: -.640px;
  white-space: nowrap;
}

.learn {
  width: 126px;
  height: 40px;
  padding: 0 0 2px;
  border: 2px solid #e6e6e6;
  border-radius: 20px;
  background: transparent;
  color: #e6e6e6;
  font: 600 16px/20px "Noto Sans", sans-serif;
  letter-spacing: -.5px;
}

.bar {
  width: 1px;
  height: 40px;
  margin: 0 25px 0 10px;
  background: #8a8a8a;
}

/* icon dock */
.dockcol {
  z-index: 2;
}

.dock {
  position: relative;
  height: 537px;
  border: solid #383838;
  border-width: 0 2px 2px 1px;
  background: #535353;
  box-shadow: -3px 2px 4px rgba(0, 0, 0, .2);
}

.dock section {
  display: flex;
  flex-direction: column;
  align-items: center;
  gap: 5px;
  height: 122px;
  padding-top: 4px;
  border-top: 1px solid #383838;
}

.dock section:first-child { height: 85px; border-top: 0; }
.dock section:nth-child(3) { height: 121px; }
.dock section:nth-child(4) { height: 86px; }

.dock section svg {
  width: 30px;
  height: 30px;
}

.dock section svg.on {
  width: 36px;
  border: 1px solid #606060;
  border-radius: 3px;
  background: #454545;
}

.tooltip {
  position: absolute;
  top: 477px;
  left: 20px;
  width: 54px;
  height: 25px;
  border: 1px solid #fff;
  border-radius: 2px;
  background: #f9f9f9;
  box-shadow: 2px 2px 3px rgba(0, 0, 0, .5);
  color: #575757;
  font-size: 14px;
  line-height: 23px;
  text-align: center;
}

/* status bar */
.status {
  display: flex;
  align-items: center;
  height: 31px;
  padding: 0 0 1px 6px;
  border-top: 2px solid #484848;
}

.help {
  width: 19px;
  height: 19px;
  margin-right: 12px;
  border-radius: 50%;
  background: #c4c4c4;
  color: #444;
  font-size: 14px;
  font-weight: bold;
  line-height: 19px;
  text-align: center;
}

.hint {
  letter-spacing: -.030px;
}

.navbar {
  display: flex;
  height: 19px;
  padding-left: 4px;
  overflow: hidden;
}

.nfield {
  display: flex;
  flex: none;
  height: 28px;
  border: 2px solid #5c5c5c;
  border-radius: 3px;
  background: #454545;
  color: #f4f4f4;
}

.nfield span {
  flex: 1;
  padding: 4px 0 0 3px;
}

.nfield b {
  display: flex;
  align-items: center;
  justify-content: center;
  width: 22px;
  border-left: 1px solid #5c5c5c;
}

.n-zoom { width: 86px; }
.n-rot { width: 87px; margin-left: 5px; }
.n-first { margin: 6px 0 0 9px; }
.n-page { width: 75px; margin-left: 9px; }
.n-next { margin: 6px 0 0 11px; }

.n-info {
  width: 251px;
  margin-left: 9px;
  padding-top: 6px;
  border: solid #474747;
  border-width: 0 1px;
  text-align: center;
}

.n-play { margin: 6px 0 0 8px; }

.hscroll {
  position: relative;
  flex: 1;
  margin-left: 5px;
  padding: 6px 7px;
  background: #484848;
}

.thumb {
  position: absolute;
  top: 2px;
  left: 635px;
  width: 32px;
  height: 18px;
  border-radius: 9px 9px 8px 8px;
  background: #606060;
}

/* properties panel */
.props {
  display: flex;
  flex-direction: column;
  width: 312px;
}

.tabs {
  display: flex;
  height: 34px;
  border-left: 1px solid #383838;
  border-bottom: 1px solid #3a3a3a;
  background: #424242;
}

.tab {
  width: 74px;
  padding: 9px 0 0 10px;
  border: solid #3c3c3c;
  border-width: 0 1px;
  color: #969696;
  font-size: 11.500px;
  font-weight: 600;
  letter-spacing: -.05px;
}

.tab.on {
  width: 83px;
  height: 34px;
  padding-left: 12px;
  border: 0;
  background: #535353;
  color: #fff;
}

.props-body {
  flex: 1;
  padding: 0 13px 0 0;
  border-left: 2px solid #3a3a3a;
}

.props-body section {
  padding-left: 11px;
  border-bottom: 1px solid #4a4a4a;
}

.props-body h3 {
  margin: 0;
  padding-left: 1px;
  font-size: 12px;
  font-weight: normal;
}

.p-sel {
  display: flex;
  align-items: center;
  justify-content: space-between;
  height: 42px;
}

.p-sel span {
  padding: 2px 0 0 1px;
}

.p-sel .btn {
  width: 54px;
  padding: 0;
}

.p-transform {
  height: 137px;
  padding-top: 15px;
}

.tf {
  display: flex;
  align-items: flex-start;
  margin-top: 8px;
}

.tf-ref { margin-top: 16px; }

.tf-fields {
  display: grid;
  grid-template-columns: 18px 70px 20px 22px 70px;
  grid-auto-rows: 26px;
  row-gap: 6.500px;
  margin-left: 13px;
}

.tf label { padding-top: 6px; }
.tf label:nth-of-type(even) { grid-column: 4; }
.tf .field { padding: 0 4px 2px; letter-spacing: 0; }
.tf-link { margin: 19px 0 0 18px; }
.tf-angle { margin: 4px 0 0 -6px; }

.tf .off {
  justify-content: space-between;
  padding-right: 6px;
  border-color: #585858;
  background: #585858;
  color: #767676;
}

.off svg { color: #7c7c7c; }

.p-art {
  height: 226px;
  padding-top: 15px;
}

.row {
  display: flex;
  align-items: center;
  height: 26px;
  margin-top: 10px;
}

.row:nth-of-type(1) { margin-top: 14px; }
.row label { width: 58px; padding: 2px 0 0 1px; }
.row .field { width: 132px; height: 26px; }
.row .field.big { padding: 0 5px 1px; font-size: 13px; }
.row .split { padding-right: 0; }

.split b {
  display: flex;
  align-items: center;
  justify-content: center;
  width: 21px;
  height: 22px;
  border-left: 1px solid #5c5c5c;
}

.a-add { margin-left: 16px; }
.a-trash { margin-left: 25px; }
.row .orient { height: 27px; margin-left: 6px; }
.row .orient span { width: 35px; }
.row .orient span:last-child { width: 38px; }
.a-swatch { margin-left: 15px; }

.check {
  display: flex;
  align-items: center;
  height: 16px;
  margin: 11px 0 0 7px;
  letter-spacing: -.2px;
}

.check.first { margin-top: 27px; }

.box {
  width: 15px;
  height: 15px;
  margin-right: 6px;
  padding: 1px;
  border: 1px solid #c4c4c4;
  border-radius: 2px;
}

.checked { background: #c4c4c4; }

.props-body .p-quick {
  padding-top: 21px;
  border: 0;
}

.quick {
  display: grid;
  grid-template-columns: 146px 126px;
  gap: 12px;
  margin-top: 12px;
}

.quick .btn { height: 27px; }
.quick .wide { grid-column: 1 / 3; }

.props-foot {
  height: 8px;
  padding: 1px 0 0 145px;
  border-top: 2px solid #383838;
}
```
